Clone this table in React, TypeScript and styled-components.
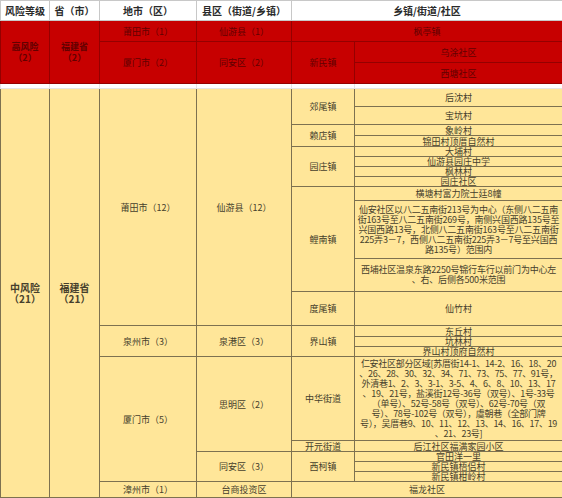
import React from 'react';
import styled, { createGlobalStyle } from 'styled-components';

const GlobalStyle = createGlobalStyle`
  * {
    margin: 0;
    padding: 0;
    box-sizing: border-box;
  }

  body {
    background: #ffffff;
    font-family: "Noto Sans CJK SC", "Noto Sans", sans-serif;
    color: #463f2c;
  }
`;

type Tone = 'head' | 'red' | 'gap' | 'yellow';

const palette: Record<Tone, { bg: string; fg: string; line: string }> = {
  head: { bg: '#ffffff', fg: '#2a2a2a', line: '#c8c8c8' },
  red: { bg: '#c70000', fg: '#620000', line: '#940000' },
  gap: { bg: '#ffffff', fg: '#ffffff', line: '#e4e4e4' },
  yellow: { bg: '#ffe699', fg: '#463f2c', line: '#7d7150' },
};

const Table = styled.table`
  width: 562px;
  border-collapse: collapse;
  table-layout: fixed;
`;

const Col = styled.col<{ $w: number }>`
  width: ${p => p.$w}px;
`;

const Row = styled.tr<{ $h: number }>`
  height: ${p => p.$h}px;
`;

const HeadCell = styled.th`
  padding: 0 1px;
  background: ${palette.head.bg};
  color: ${palette.head.fg};
  border: 1px solid ${palette.head.line};
  font-size: 10px;
  line-height: 10px;
  font-weight: 700;
  text-align: center;
  vertical-align: middle;
  white-space: nowrap;
`;

const Cell = styled.td<{ $tone: Tone; $bold?: boolean; $size?: number; $lh?: number; $tight?: number }>`
  padding: 0 1px;
  text-align: center;
  vertical-align: middle;
  background: ${p => palette[p.$tone].bg};
  color: ${p => palette[p.$tone].fg};
  border: 1px solid ${p => palette[p.$tone].line};
  font-size: ${p => p.$size ?? 9}px;
  line-height: ${p => p.$lh ?? 9}px;
  font-weight: ${p => (p.$bold ? 700 : 400)};
  letter-spacing: ${p => p.$tight ?? 0}px;
  white-space: nowrap;
  overflow: hidden;
`;

type CellProps = Omit<React.ComponentProps<typeof Cell>, '$tone'> & { children?: React.ReactNode };

const RedCell: React.FC<CellProps> = props => <Cell {...props} $tone="red" />;

const Y: React.FC<CellProps> = props => <Cell {...props} $tone="yellow" />;

const Lines: React.FC<{ lines: string[] }> = ({ lines }) => (
  <>
    {lines.map((l, i) => (
      <React.Fragment key={i}>
        {i > 0 && <br />}
        {l}
      </React.Fragment>
    ))}
  </>
);

const xianAn = [
  '仙安社区以八二五南街213号为中心（东侧八二五南',
  '街163号至八二五南街269号，南侧兴国西路135号至',
  '兴国西路13号，北侧八二五南街163号至八二五南街',
  '225弄3－7，西侧八二五南街225弄3－7号至兴国西',
  '路135号）范围内',
];

const xiPu = [
  '西埔社区温泉东路2250号锦行车行以前门为中心左',
  '、右、后侧各500米范围',
];

const renAn = [
  '仁安社区部分区域[苏厝街14-1、14-2、16、18、20',
  '、26、28、30、32、34、71、73、75、77、91号，',
  '外清巷1、2、3、3-1、3-5、4、6、8、10、13、17',
  '、19、21号，盐溪街12号-36号（双号）、1号-33号',
  '（单号）、52号-58号（双号）、62号-70号（双',
  '号）、78号-102号（双号），虞朝巷（全部门牌',
  '号），吴厝巷9、10、11、12、13、14、16、17、19',
  '、21、23号]',
];

const App: React.FC = () => {
  return (
    <>
      <GlobalStyle />
      <Table>
        <colgroup>
          <Col $w={49} />
          <Col $w={50} />
          <Col $w={97} />
          <Col $w={95} />
          <Col $w={63} />
          <Col $w={208} />
        </colgroup>
        <thead>
          <Row $h={20}>
            <HeadCell>风险等级</HeadCell>
            <HeadCell>省（市）</HeadCell>
            <HeadCell>地市（区）</HeadCell>
            <HeadCell>县区（街道/乡镇）</HeadCell>
            <HeadCell colSpan={2}>乡镇/街道/社区</HeadCell>
          </Row>
        </thead>
        <tbody>
          {/* 高风险 */}
          <Row $h={21}>
            <RedCell rowSpan={3} $bold $lh={11}>高风险<br />（2）</RedCell>
            <RedCell rowSpan={3} $bold $lh={11}>福建省<br />（2）</RedCell>
            <RedCell>莆田市（1）</RedCell>
            <RedCell>仙游县（1）</RedCell>
            <RedCell colSpan={2}>枫亭镇</RedCell>
          </Row>
          <Row $h={21}>
            <RedCell rowSpan={2}>厦门市（2）</RedCell>
            <RedCell rowSpan={2}>同安区（2）</RedCell>
            <RedCell rowSpan={2}>新民镇</RedCell>
            <RedCell>乌涂社区</RedCell>
          </Row>
          <Row $h={21}>
            <RedCell>西塘社区</RedCell>
          </Row>
          <Row $h={5}>
            {[0, 1, 2, 3, 4, 5].map(i => (
              <Cell key={i} $tone="gap" />
            ))}
          </Row>

          {/* 中风险 */}
          <Row $h={18}>
            <Y rowSpan={21} $bold $size={10} $lh={11}>中风险<br />（21）</Y>
            <Y rowSpan={21} $bold $size={10} $lh={11}>福建省<br />（21）</Y>
            <Y rowSpan={12}>莆田市（12）</Y>
            <Y rowSpan={12}>仙游县（12）</Y>
            <Y rowSpan={2}>郊尾镇</Y>
            <Y>后沈村</Y>
          </Row>
          <Row $h={18}>
            <Y>宝坑村</Y>
          </Row>
          <Row $h={11}>
            <Y rowSpan={2}>赖店镇</Y>
            <Y>象岭村</Y>
          </Row>
          <Row $h={11}>
            <Y>锦田村顶厝自然村</Y>
          </Row>
          <Row $h={10}>
            <Y rowSpan={4}>园庄镇</Y>
            <Y>大埔村</Y>
          </Row>
          <Row $h={10}>
            <Y>仙游县园庄中学</Y>
          </Row>
          <Row $h={10}>
            <Y>枫林村</Y>
          </Row>
          <Row $h={10}>
            <Y>园庄社区</Y>
          </Row>
          <Row $h={14}>
            <Y rowSpan={3}>鲤南镇</Y>
            <Y>横塘村富力院士廷8幢</Y>
          </Row>
          <Row $h={58}>
            <Y $lh={10} $tight={-0.2}>
              <Lines lines={xianAn} />
            </Y>
          </Row>
          <Row $h={33}>
            <Y $lh={10.5} $tight={-0.2}>
              <Lines lines={xiPu} />
            </Y>
          </Row>
          <Row $h={34}>
            <Y>度尾镇</Y>
            <Y>仙竹村</Y>
          </Row>
          <Row $h={11}>
            <Y rowSpan={3}>泉州市（3）</Y>
            <Y rowSpan={3}>泉港区（3）</Y>
            <Y rowSpan={3}>界山镇</Y>
            <Y>东丘村</Y>
          </Row>
          <Row $h={10}>
            <Y>坑林村</Y>
          </Row>
          <Row $h={10}>
            <Y>界山村顶府自然村</Y>
          </Row>
          <Row $h={84}>
            <Y rowSpan={5}>厦门市（5）</Y>
            <Y rowSpan={2}>思明区（2）</Y>
            <Y>中华街道</Y>
            <Y $lh={10} $tight={-0.3}>
              <Lines lines={renAn} />
            </Y>
          </Row>
          <Row $h={11}>
            <Y>开元街道</Y>
            <Y>后江社区福满家园小区</Y>
          </Row>
          <Row $h={10}>
            <Y rowSpan={3}>同安区（3）</Y>
            <Y rowSpan={3}>西柯镇</Y>
            <Y>官田洋一里</Y>
          </Row>
          <Row $h={10}>
            <Y>新民镇梧侣村</Y>
          </Row>
          <Row $h={10}>
            <Y>新民镇柑岭村</Y>
          </Row>
          <Row $h={16}>
            <Y>漳州市（1）</Y>
            <Y>台商投资区</Y>
            <Y colSpan={2}>福龙社区</Y>
          </Row>
        </tbody>
      </Table>
    </>
  );
};

export default App;
